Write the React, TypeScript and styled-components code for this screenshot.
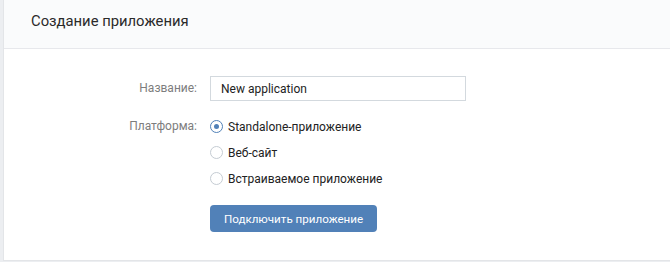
import React from "react";
import styled, { createGlobalStyle } from "styled-components";

const Global = createGlobalStyle`
  html, body { margin: 0; padding: 0; background: #ffffff; }
  body { font-family: Roboto, "Open Sans", Arial, sans-serif; -webkit-font-smoothing: antialiased; }
`;

const Page = styled.div`
  width: 670px;
  height: 262px;
  box-sizing: border-box;
  padding-left: 3px;
  background: #eceef1;
  display: flex;
`;

const Panel = styled.div`
  flex: 1;
  height: 261px;
  box-sizing: border-box;
  background: #ffffff;
  border-left: 1px solid #e3e5e8;
  border-bottom: 1px solid #e3e5e8;
  display: flex;
  flex-direction: column;
`;

const Header = styled.div`
  height: 49px;
  box-sizing: border-box;
  background: #fafbfc;
  border-bottom: 1px solid #e7e8ec;
  padding-left: 27px;
  display: flex;
  align-items: center;
  font-size: 14.8px;
  color: #2a2a2a;
  padding-bottom: 6px;
`;

const Form = styled.div`
  padding-top: 27px;
  display: grid;
  grid-template-columns: 193px 1fr;
  column-gap: 13px;
  align-items: start;
`;

const Label = styled.div<{ $top: number }>`
  text-align: right;
  font-size: 12px;
  color: #7d7d7d;
  padding-top: ${(p) => p.$top}px;
  line-height: 14px;
`;

const Input = styled.div`
  width: 256px;
  height: 25px;
  box-sizing: border-box;
  border: 1px solid #d3d9de;
  font-size: 12px;
  color: #222;
  padding-left: 10px;
  display: flex;
  align-items: center;
`;

const RadioList = styled.div`
  display: flex;
  flex-direction: column;
  gap: 13px;
  padding-top: 19px;
`;

const RadioRow = styled.div`
  display: flex;
  align-items: center;
  height: 13px;
  gap: 5px;
  font-size: 12px;
  color: #222;
`;

const Circle = styled.span<{ $on?: boolean }>`
  width: 13px;
  height: 13px;
  box-sizing: border-box;
  border-radius: 50%;
  border: 1px solid ${(p) => (p.$on ? "#5181b8" : "#c5ccd3")};
  display: flex;
  align-items: center;
  justify-content: center;
  &::after {
    content: "";
    width: 5px;
    height: 5px;
    border-radius: 50%;
    background: ${(p) => (p.$on ? "#5181b8" : "transparent")};
  }
`;

const Button = styled.div`
  grid-column: 2;
  margin-top: 20px;
  width: 167px;
  height: 27px;
  border-radius: 4px;
  background: #5181b8;
  color: #ffffff;
  font-size: 11.6px;
  display: flex;
  align-items: center;
  justify-content: center;
`;

export default function App() {
  return (
    <>
      <Global />
      <Page>
        <Panel>
          <Header>Создание приложения</Header>
          <Form>
            <Label $top={5}>Название:</Label>
            <Input>New application</Input>
            <Label $top={18}>Платформа:</Label>
            <RadioList>
              <RadioRow>
                <Circle $on />
                Standalone-приложение
              </RadioRow>
              <RadioRow>
                <Circle />
                Веб-сайт
              </RadioRow>
              <RadioRow>
                <Circle />
                Встраиваемое приложение
              </RadioRow>
            </RadioList>
            <Button>Подключить приложение</Button>
          </Form>
        </Panel>
      </Page>
    </>
  );
}
